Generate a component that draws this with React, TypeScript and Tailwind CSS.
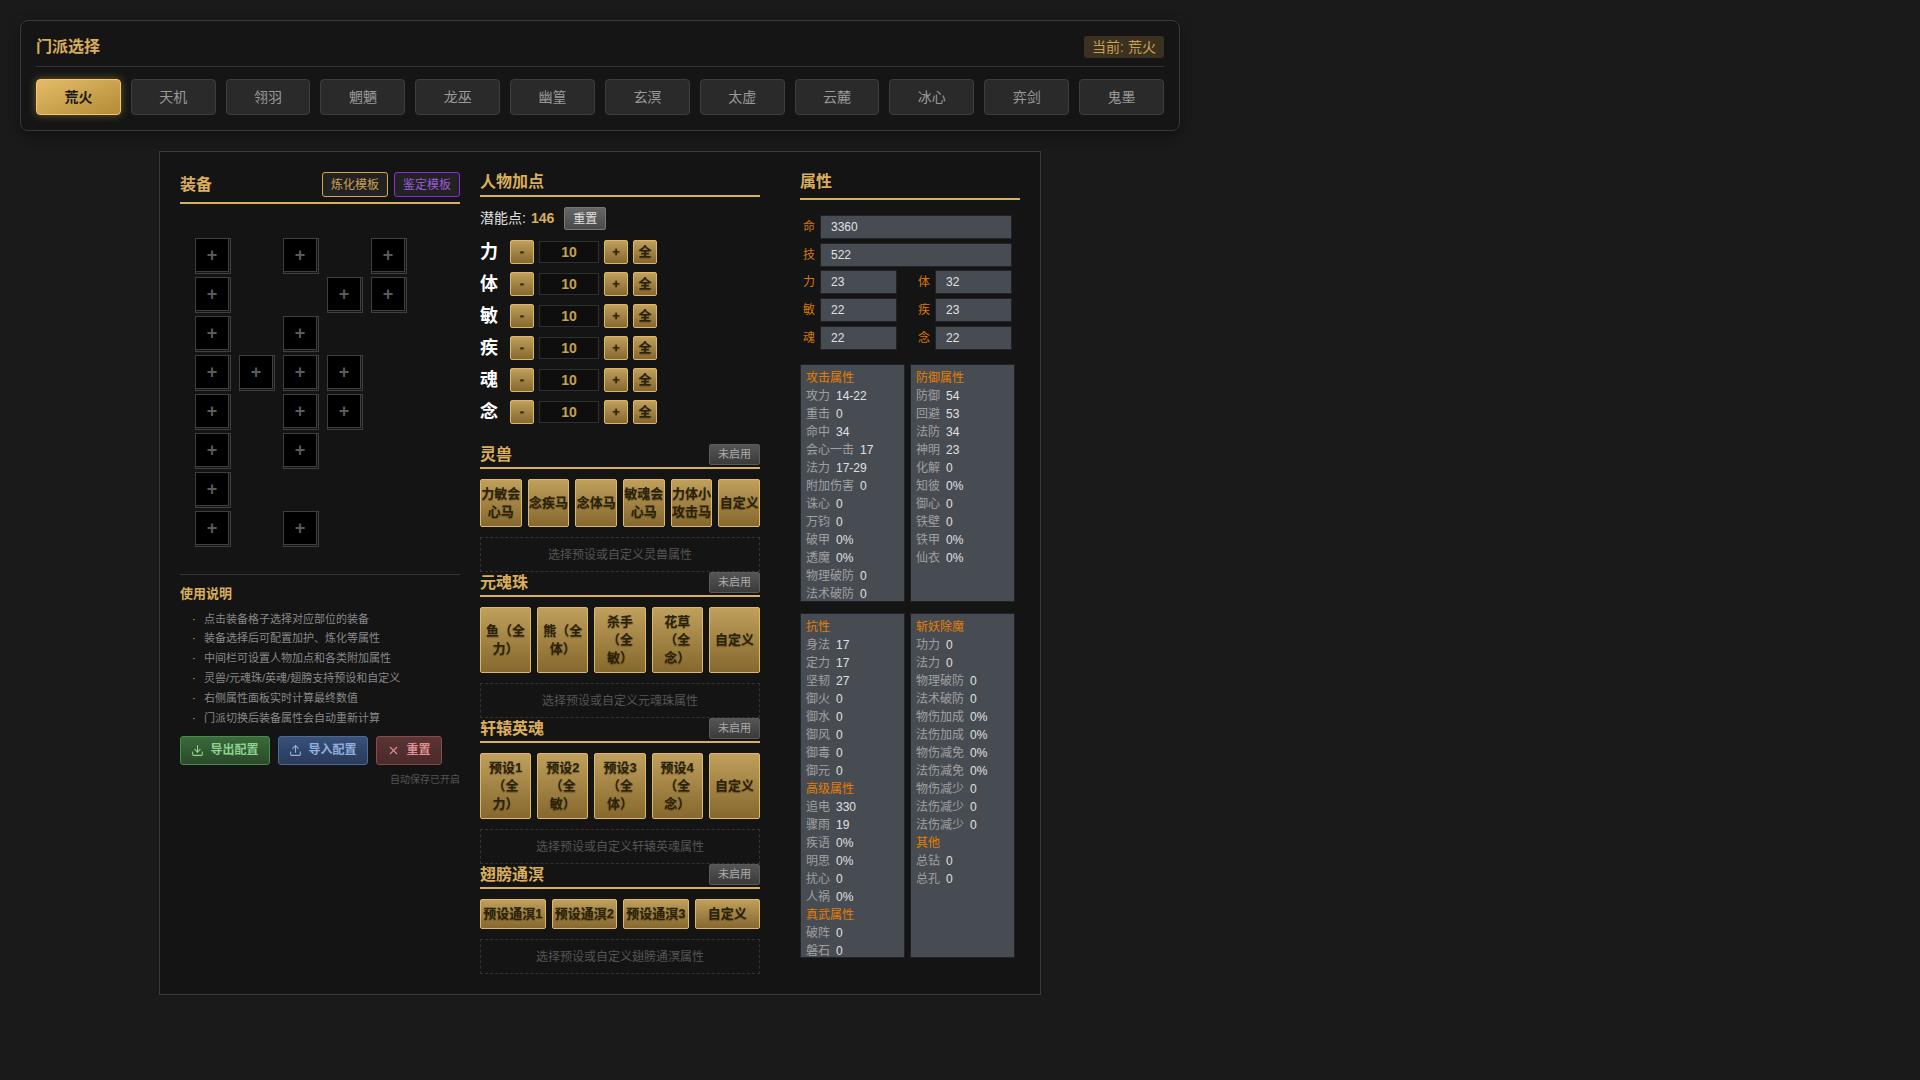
import React from "react";
import { Download, Upload, X } from "lucide-react";

const FONT = "font-['Liberation_Sans','Noto_Sans_CJK_SC',sans-serif]";
const sects = ["荒火","天机","翎羽","魍魉","龙巫","幽篁","玄溟","太虚","云麓","冰心","弈剑","鬼墨"];
const slots = [
  [1,0,1,0,1],
  [1,0,0,1,1],
  [1,0,1,0,0],
  [1,1,1,1,0],
  [1,0,1,1,0],
  [1,0,1,0,0],
  [1,0,0,0,0],
  [1,0,1,0,0],
];
const tips = ["点击装备格子选择对应部位的装备","装备选择后可配置加护、炼化等属性","中间栏可设置人物加点和各类附加属性","灵兽/元魂珠/英魂/翅膀支持预设和自定义","右侧属性面板实时计算最终数值","门派切换后装备属性会自动重新计算"];
const gold = "bg-gradient-to-b from-[#c0a05c] to-[#86682e] border border-[#dcb868] text-[#2b2208] rounded-[2px] font-bold [text-shadow:0_1px_1px_rgba(0,0,0,0.35)]";

function Header({ title }: { title: string }) {
  return (
    <div className="flex justify-between items-end border-b-2 border-[#dcb05a] pb-[2px] mb-[10px]">
      <span className="text-[16px] font-bold leading-[21px] text-[#d9ae5c]">{title}</span>
      <button className="w-[51px] h-[21px] rounded-[2px] border border-[#5a5a5a] bg-gradient-to-b from-[#555555] to-[#3a3a3a] text-[11px] text-[#aaaaaa]">未启用</button>
    </div>
  );
}

function Presets({ items, h, hint, title }: { items: string[]; h: string; hint: string; title: string }) {
  return (
    <div>
      <Header title={title} />
      <div className={`flex gap-[6px] ${h}`}>
        {items.map((t) => (
          <button key={t} className={`${gold} flex-1 min-w-0 text-[13px] leading-[18px] px-0 [text-spacing-trim:space-all]`}>{t}</button>
        ))}
      </div>
      <div className="mt-[10px] h-[35px] border border-dashed border-[#333333] flex items-center justify-center text-[12px] text-[#555555]">{hint}</div>
    </div>
  );
}

type Row = [string, string] | string;
function Panel({ rows, h }: { rows: Row[]; h: string }) {
  return (
    <div className={`w-[105px] ${h} overflow-hidden bg-[#474c53] border border-[#1f2328] px-[5px] pt-[4px] text-[12px] leading-[18px]`}>
      {rows.map((r, i) =>
        typeof r === "string" ? (
          <div key={i} className="text-[#e67e00]">{r}</div>
        ) : (
          <div key={i} className="flex gap-[6px] whitespace-nowrap">
            <span className="text-[#a0a0a0]">{r[0]}</span>
            <span className="text-[#e0e0e0]">{r[1]}</span>
          </div>
        )
      )}
    </div>
  );
}

function Attr({ label, value, w }: { label: string; value: string; w: string }) {
  return (
    <div className="flex items-center">
      <span className="w-[20px] pl-[3px] text-[12px] text-[#d97706]">{label}</span>
      <div className={`${w} h-[24px] bg-[#474c53] border border-[#1f2328] pl-[10px] text-[12px] leading-[22px] text-[#e0e0e0]`}>{value}</div>
    </div>
  );
}

export default function App() {
  return (
    <div className={`${FONT} min-h-[1080px] bg-[#1a1a1a] pt-[20px] text-[#e0e0e0]`}>
      <div className="w-[1160px] ml-[20px] rounded-[8px] border border-[#3a3a3a] bg-[#151515] p-[15px] shadow-[0_4px_12px_rgba(0,0,0,0.4)]">
        <div className="flex items-center justify-between h-[31px] border-b border-[#333333] pb-[8px] mb-[12px]">
          <span className="text-[16px] font-bold leading-[22px] text-[#d9ae5c]">门派选择</span>
          <span className="h-[22px] w-[80px] rounded-[3px] bg-[#3b3120] text-center text-[14px] leading-[22px] text-[#c9a052]">当前: 荒火</span>
        </div>
        <div className="flex gap-[10px]">
          {sects.map((s, i) => (
            <button
              key={s}
              className={
                i === 0
                  ? "flex-1 h-[36px] rounded-[4px] border border-[#f0c870] bg-gradient-to-br from-[#e5bd68] to-[#b38a35] text-[14px] font-bold text-[#1a1a1a] shadow-[0_0_8px_rgba(224,176,80,0.45)]"
                  : "flex-1 h-[36px] rounded-[4px] border border-[#3e3e3e] bg-[#2a2a2a] text-[14px] text-[#999999]"
              }
            >
              {s}
            </button>
          ))}
        </div>
      </div>

      <div className="w-[882px] h-[844px] ml-[159px] mt-[20px] border border-[#3a3a3a] bg-[#141414] p-[20px] flex">
        <div className="w-[280px]">
          <div className="flex items-center justify-between border-b-2 border-[#dcb05a] pb-[5px] h-[32px]">
            <span className="text-[16px] font-bold text-[#d9ae5c]">装备</span>
            <div className="flex gap-[6px]">
              <button className="w-[66px] h-[25px] rounded-[3px] border border-[#d4a64e] bg-[#222222] text-[12px] text-[#c9a052]">炼化模板</button>
              <button className="w-[66px] h-[25px] rounded-[3px] border border-[#8a2be2] bg-[#222222] text-[12px] text-[#9b59d9]">鉴定模板</button>
            </div>
          </div>
          <div className="ml-[15px] mt-[34px] flex flex-col gap-[3px]">
            {slots.map((r, i) => (
              <div key={i} className="flex gap-[8px]">
                {r.map((c, j) =>
                  c ? (
                    <div key={j} className="w-[36px] h-[36px] border border-[#3f3f3f] bg-[#161616]">
                      <div className="w-[33px] h-[33px] bg-black border-r border-b border-[#3f3f3f] flex items-center justify-center text-[#5a5a5a] text-[18px] font-bold leading-none">+</div>
                    </div>
                  ) : (
                    <div key={j} className="w-[36px] h-[36px]" />
                  )
                )}
              </div>
            ))}
          </div>
          <div className="mt-[27px] border-t border-[#333333] pt-[10px]">
            <div className="text-[13px] font-bold leading-[18px] text-[#d9ae5c]">使用说明</div>
            <ul className="mt-[6px]">
              {tips.map((t) => (
                <li key={t} className="flex items-center h-[19.8px] text-[11px] text-[#888888]">
                  <span className="w-[24px] pl-[12px] text-[#d9ae5c]">·</span>
                  {t}
                </li>
              ))}
            </ul>
            <div className="flex gap-[8px] mt-[8px]">
              <button className="w-[90px] h-[29px] rounded-[3px] border border-[#4a8a4a] bg-gradient-to-b from-[#3a6a3a] to-[#2a4a2a] text-[12px] font-bold text-[#90d090] flex items-center justify-center gap-[6px]"><Download size={13} />导出配置</button>
              <button className="w-[90px] h-[29px] rounded-[3px] border border-[#4a6a9a] bg-gradient-to-b from-[#3a5078] to-[#2a3a5a] text-[12px] font-bold text-[#90b0e0] flex items-center justify-center gap-[6px]"><Upload size={13} />导入配置</button>
              <button className="w-[66px] h-[29px] rounded-[3px] border border-[#8a4a4a] bg-gradient-to-b from-[#5a3535] to-[#4a2a2a] text-[12px] font-bold text-[#e09090] flex items-center justify-center gap-[6px]"><X size={13} />重置</button>
            </div>
            <div className="mt-[8px] text-right text-[10px] leading-[14px] text-[#555555]">自动保存已开启</div>
          </div>
        </div>

        <div className="w-[280px] ml-[20px]">
          <div className="border-b-2 border-[#dcb05a] h-[25px] text-[16px] font-bold leading-[20px] text-[#d9ae5c]">人物加点</div>
          <div className="flex items-center h-[23px] mt-[10px] text-[14px]">
            <span>潜能点:</span>
            <span className="ml-[5px] font-bold text-[#d9ae5c]">146</span>
            <button className="ml-[10px] w-[42px] h-[23px] rounded-[2px] border border-[#777777] bg-gradient-to-b from-[#666666] to-[#4a4a4a] text-[12px] text-[#e0e0e0]">重置</button>
          </div>
          <div className="mt-[10px] flex flex-col gap-[8px]">
            {["力","体","敏","疾","魂","念"].map((l) => (
              <div key={l} className="flex items-center h-[24px] gap-[5px]">
                <span className="w-[25px] text-[18px] font-bold text-white">{l}</span>
                <button className={`${gold} w-[24px] h-[24px] text-[13px]`}>-</button>
                <div className="w-[60px] h-[22px] bg-[#0e0e0e] border border-[#2e2e2e] text-center text-[14px] font-bold leading-[20px] text-[#c9a052]">10</div>
                <button className={`${gold} w-[24px] h-[24px] text-[13px]`}>+</button>
                <button className={`${gold} w-[24px] h-[24px] text-[13px]`}>全</button>
              </div>
            ))}
          </div>
          <div className="mt-[20px]">
            <Presets title="灵兽" h="h-[48px]" items={["力敏会心马","念疾马","念体马","敏魂会心马","力体小攻击马","自定义"]} hint="选择预设或自定义灵兽属性" />
            <Presets title="元魂珠" h="h-[66px]" items={["鱼（全力）","熊（全体）","杀手（全敏）","花草（全念）","自定义"]} hint="选择预设或自定义元魂珠属性" />
            <Presets title="轩辕英魂" h="h-[66px]" items={["预设1（全力）","预设2（全敏）","预设3（全体）","预设4（全念）","自定义"]} hint="选择预设或自定义轩辕英魂属性" />
            <Presets title="翅膀通溟" h="h-[30px]" items={["预设通溟1","预设通溟2","预设通溟3","自定义"]} hint="选择预设或自定义翅膀通溟属性" />
          </div>
        </div>

        <div className="w-[220px] ml-[40px]">
          <div className="border-b-2 border-[#dcb05a] h-[28px] text-[16px] font-bold leading-[20px] text-[#d9ae5c]">属性</div>
          <div className="mt-[15px] flex flex-col gap-[4px] w-[212px]">
            <Attr label="命" value="3360" w="w-[192px]" />
            <Attr label="技" value="522" w="w-[192px]" />
            <div className="flex justify-between -mt-[1px]"><Attr label="力" value="23" w="w-[77px]" /><Attr label="体" value="32" w="w-[77px]" /></div>
            <div className="flex justify-between"><Attr label="敏" value="22" w="w-[77px]" /><Attr label="疾" value="23" w="w-[77px]" /></div>
            <div className="flex justify-between"><Attr label="魂" value="22" w="w-[77px]" /><Attr label="念" value="22" w="w-[77px]" /></div>
          </div>
          <div className="flex gap-[5px] mt-[14px]">
            <Panel h="h-[238px]" rows={["攻击属性",["攻力","14-22"],["重击","0"],["命中","34"],["会心一击","17"],["法力","17-29"],["附加伤害","0"],["诛心","0"],["万钧","0"],["破甲","0%"],["透魔","0%"],["物理破防","0"],["法术破防","0"]]} />
            <Panel h="h-[238px]" rows={["防御属性",["防御","54"],["回避","53"],["法防","34"],["神明","23"],["化解","0"],["知彼","0%"],["御心","0"],["铁壁","0"],["铁甲","0%"],["仙衣","0%"]]} />
          </div>
          <div className="flex gap-[5px] mt-[11px]">
            <Panel h="h-[345px]" rows={["抗性",["身法","17"],["定力","17"],["坚韧","27"],["御火","0"],["御水","0"],["御风","0"],["御毒","0"],["御元","0"],"高级属性",["追电","330"],["骤雨","19"],["疾语","0%"],["明思","0%"],["扰心","0"],["人祸","0%"],"真武属性",["破阵","0"],["磐石","0"]]} />
            <Panel h="h-[345px]" rows={["斩妖除魔",["功力","0"],["法力","0"],["物理破防","0"],["法术破防","0"],["物伤加成","0%"],["法伤加成","0%"],["物伤减免","0%"],["法伤减免","0%"],["物伤减少","0"],["法伤减少","0"],["法伤减少","0"],"其他",["总钻","0"],["总孔","0"]]} />
          </div>
        </div>
      </div>
    </div>
  );
}
